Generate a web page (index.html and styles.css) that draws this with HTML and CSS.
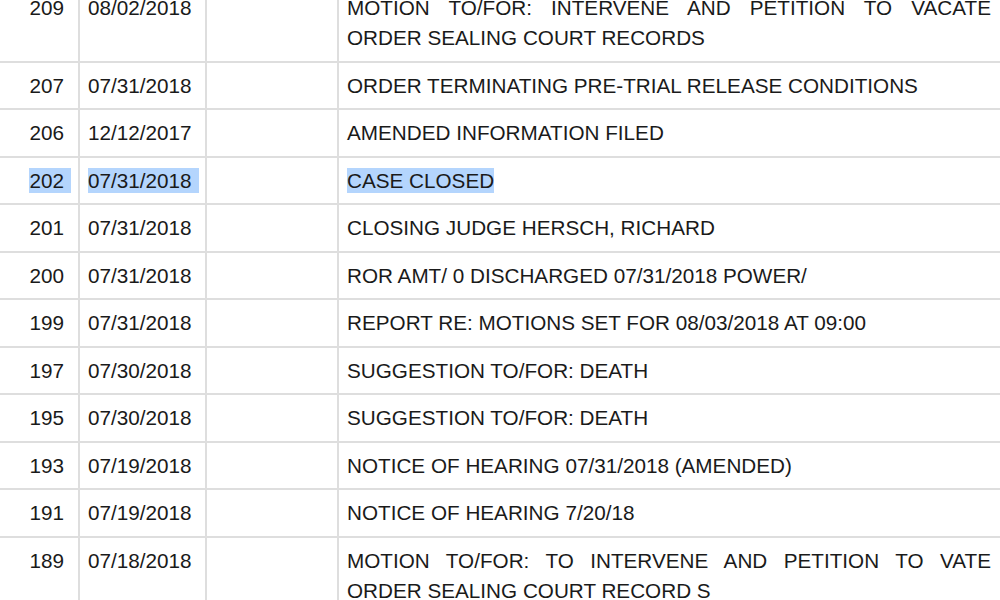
FILE: index.html
```html
<!DOCTYPE html>
<html>
<head>
<meta charset="utf-8">
<link rel="stylesheet" href="styles.css">
</head>
<body>
<table class="docket">
  <colgroup>
    <col class="c-num"><col class="c-date"><col class="c-blank"><col class="c-desc">
  </colgroup>
  <tr><td class="num">209</td><td class="date">08/02/2018</td><td></td><td class="desc">MOTION TO/FOR: INTERVENE AND PETITION TO VACATE ORDER SEALING COURT RECORDS</td></tr>
  <tr><td class="num">207</td><td class="date">07/31/2018</td><td></td><td class="desc">ORDER TERMINATING PRE-TRIAL RELEASE CONDITIONS</td></tr>
  <tr><td class="num">206</td><td class="date">12/12/2017</td><td></td><td class="desc">AMENDED INFORMATION FILED</td></tr>
  <tr><td class="num sel-num"><span class="sel sel-tail">202</span></td><td class="date"><span class="sel sel-tail">07/31/2018</span></td><td></td><td class="desc"><span class="sel">CASE CLOSED</span></td></tr>
  <tr><td class="num">201</td><td class="date">07/31/2018</td><td></td><td class="desc">CLOSING JUDGE HERSCH, RICHARD</td></tr>
  <tr><td class="num">200</td><td class="date">07/31/2018</td><td></td><td class="desc">ROR AMT/ 0 DISCHARGED 07/31/2018 POWER/</td></tr>
  <tr><td class="num">199</td><td class="date">07/31/2018</td><td></td><td class="desc">REPORT RE: MOTIONS SET FOR 08/03/2018 AT 09:00</td></tr>
  <tr><td class="num">197</td><td class="date">07/30/2018</td><td></td><td class="desc">SUGGESTION TO/FOR: DEATH</td></tr>
  <tr><td class="num">195</td><td class="date">07/30/2018</td><td></td><td class="desc">SUGGESTION TO/FOR: DEATH</td></tr>
  <tr><td class="num">193</td><td class="date">07/19/2018</td><td></td><td class="desc">NOTICE OF HEARING 07/31/2018 (AMENDED)</td></tr>
  <tr><td class="num">191</td><td class="date">07/19/2018</td><td></td><td class="desc">NOTICE OF HEARING 7/20/18</td></tr>
  <tr><td class="num">189</td><td class="date">07/18/2018</td><td></td><td class="desc">MOTION TO/FOR: TO INTERVENE AND PETITION TO VATE ORDER SEALING COURT RECORD S</td></tr>
</table>
</body>
</html>
```
FILE: styles.css
```css
html, body {
  margin: 0;
  padding: 0;
  background: #ffffff;
  overflow: hidden;
}

.docket {
  border-collapse: collapse;
  table-layout: fixed;
  width: 1012px;
  margin-left: -3px;
  margin-top: -17px;
  font-family: "Liberation Sans", Arial, Helvetica, sans-serif;
  font-size: 20.7px;
  line-height: 30px;
  color: #1a1a1a;
}

.c-num { width: 81px; }
.c-date { width: 127px; }
.c-blank { width: 132px; }
.c-desc { width: 672px; }

.docket td {
  border: 2px solid #dedede;
  padding: 8px 8px 7.5px 8px;
  vertical-align: top;
}

.docket td.num {
  text-align: right;
  padding-right: 14px;
}

.docket td.sel-num {
  padding-right: 7px;
}

.docket td.desc {
  text-align: justify;
  padding-right: 18px;
}

.sel {
  background: #b4d5fd;
  padding: 1px 0;
}

.sel-tail {
  padding-right: 7px;
}
```
